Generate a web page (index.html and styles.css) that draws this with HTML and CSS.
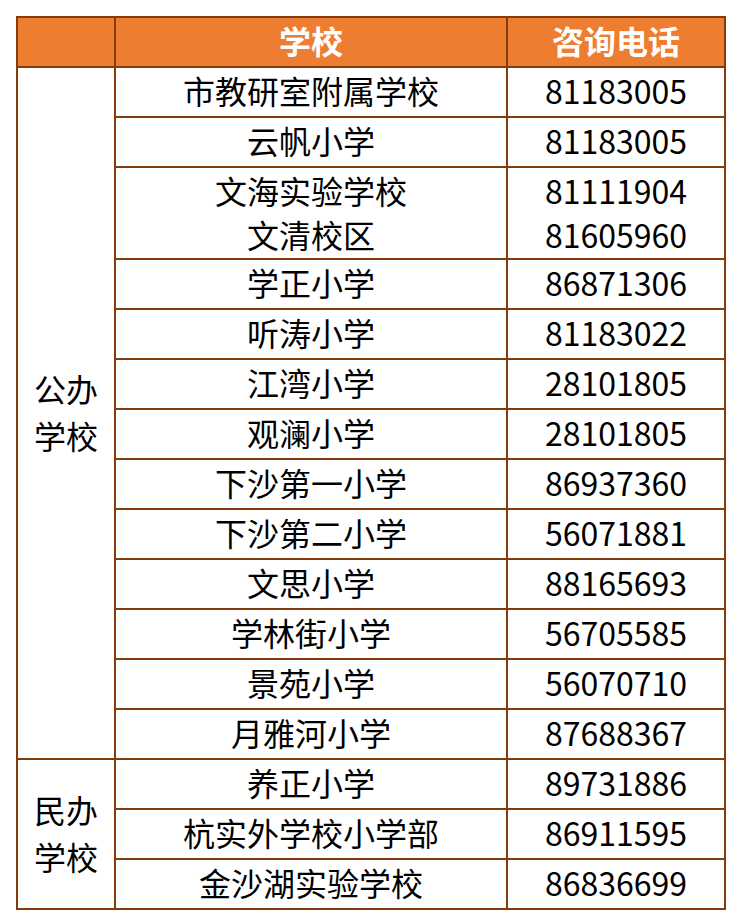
FILE: index.html
```html
<!DOCTYPE html>
<html lang="zh-CN">
<head>
<meta charset="utf-8">
<title>学校咨询电话</title>
<link rel="stylesheet" href="styles.css">
</head>
<body>
<table class="sheet">
  <colgroup>
    <col class="c-type">
    <col class="c-school">
    <col class="c-phone">
  </colgroup>
  <thead>
    <tr class="head">
      <th></th>
      <th>学校</th>
      <th>咨询电话</th>
    </tr>
  </thead>
  <tbody>
    <tr>
      <td class="type" rowspan="13">公办<br>学校</td>
      <td>市教研室附属学校</td>
      <td>81183005</td>
    </tr>
    <tr><td>云帆小学</td><td>81183005</td></tr>
    <tr class="double"><td>文海实验学校<br>文清校区</td><td>81111904<br>81605960</td></tr>
    <tr><td>学正小学</td><td>86871306</td></tr>
    <tr><td>听涛小学</td><td>81183022</td></tr>
    <tr><td>江湾小学</td><td>28101805</td></tr>
    <tr><td>观澜小学</td><td>28101805</td></tr>
    <tr><td>下沙第一小学</td><td>86937360</td></tr>
    <tr><td>下沙第二小学</td><td>56071881</td></tr>
    <tr><td>文思小学</td><td>88165693</td></tr>
    <tr><td>学林街小学</td><td>56705585</td></tr>
    <tr><td>景苑小学</td><td>56070710</td></tr>
    <tr><td>月雅河小学</td><td>87688367</td></tr>
    <tr>
      <td class="type" rowspan="3">民办<br>学校</td>
      <td>养正小学</td>
      <td>89731886</td>
    </tr>
    <tr><td>杭实外学校小学部</td><td>86911595</td></tr>
    <tr><td>金沙湖实验学校</td><td>86836699</td></tr>
  </tbody>
</table>
</body>
</html>
```
FILE: styles.css
```css
html, body {
  margin: 0;
  padding: 0;
  background: #ffffff;
}
body {
  padding: 16px 0 0 16px;
  font-family: "Noto Sans CJK SC", "Noto Sans", sans-serif;
  color: #000000;
}
.sheet {
  border-collapse: collapse;
  table-layout: fixed;
  width: 708px;
}
.c-type { width: 98px; }
.c-school { width: 392px; }
.c-phone { width: 218px; }
.sheet th,
.sheet td {
  border: 2px solid #843c0c;
  padding: 0 0 3px 0;
  text-align: center;
  vertical-align: middle;
  font-size: 32px;
  line-height: 43px;
  font-weight: 400;
}
.sheet tr {
  height: 50px;
}
.sheet .head th {
  background: #ed7d31;
  color: #ffffff;
  font-weight: 700;
}
.sheet .double {
  height: 92px;
}
.sheet .double td {
  line-height: 44px;
  padding-bottom: 2px;
}
.sheet .type {
  line-height: 47px;
}
```
